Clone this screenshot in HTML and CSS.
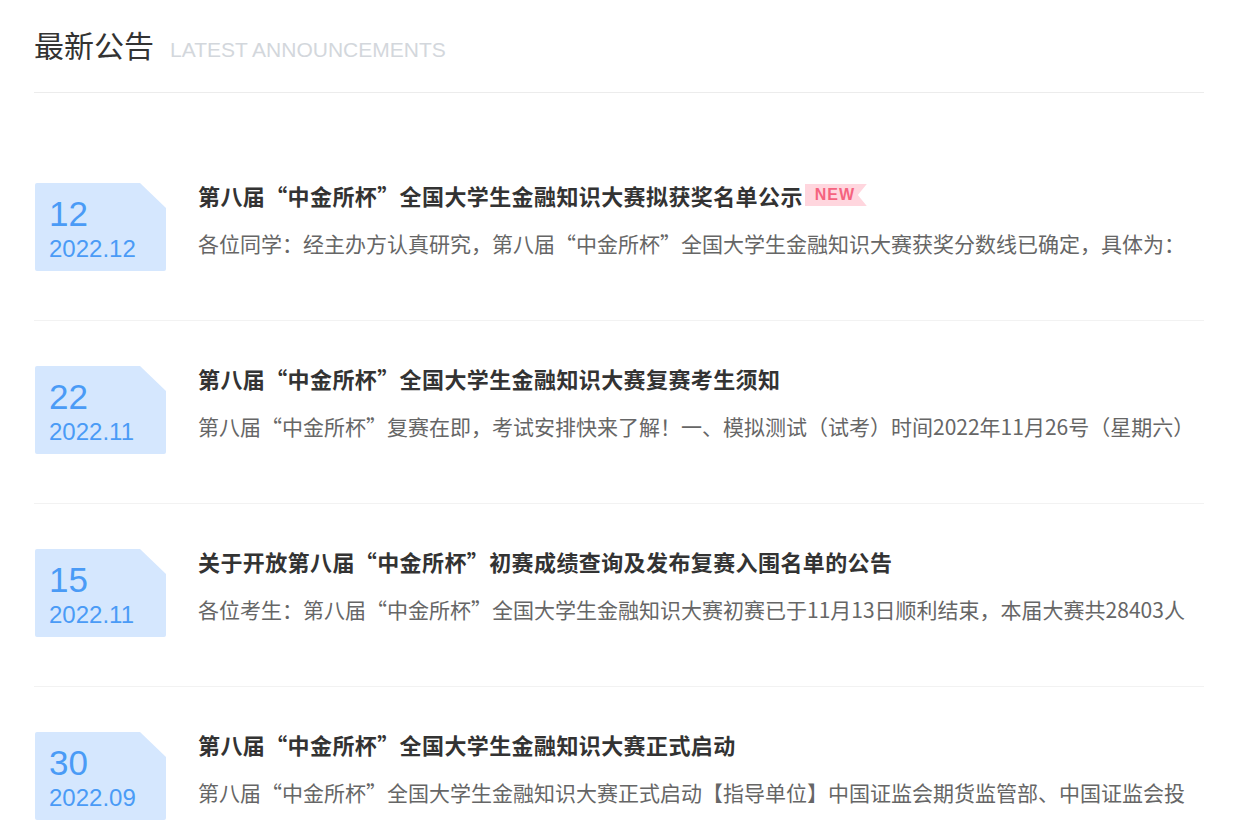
FILE: index.html
```html
<!DOCTYPE html>
<html lang="zh-CN">
<head>
    <meta charset="UTF-8">
    <meta name="viewport" content="width=device-width, initial-scale=1.0">
    <title>最新公告</title>
    <link rel="stylesheet" href="styles.css">
</head>
<body>
    <div class="notice-container">
        <div class="notice-header">
            <h2>最新公告</h2>
            <span class="sub-title">LATEST ANNOUNCEMENTS</span>
        </div>
        <ul class="notice-list">
            <li class="notice-item">
                <div class="date-box">
                    <span class="day">12</span>
                    <span class="month">2022.12</span>
                </div>
                <div class="notice-body">
                    <h3>第八届“中金所杯”全国大学生金融知识大赛拟获奖名单公示<span class="new-tag">NEW</span></h3>
                    <p>各位同学：经主办方认真研究，第八届“中金所杯”全国大学生金融知识大赛获奖分数线已确定，具体为：</p>
                </div>
            </li>
            <li class="notice-item">
                <div class="date-box">
                    <span class="day">22</span>
                    <span class="month">2022.11</span>
                </div>
                <div class="notice-body">
                    <h3>第八届“中金所杯”全国大学生金融知识大赛复赛考生须知</h3>
                    <p>第八届“中金所杯”复赛在即，考试安排快来了解！一、模拟测试（试考）时间2022年11月26号（星期六）</p>
                </div>
            </li>
            <li class="notice-item">
                <div class="date-box">
                    <span class="day">15</span>
                    <span class="month">2022.11</span>
                </div>
                <div class="notice-body">
                    <h3>关于开放第八届“中金所杯”初赛成绩查询及发布复赛入围名单的公告</h3>
                    <p>各位考生：第八届“中金所杯”全国大学生金融知识大赛初赛已于11月13日顺利结束，本届大赛共28403人</p>
                </div>
            </li>
            <li class="notice-item">
                <div class="date-box">
                    <span class="day">30</span>
                    <span class="month">2022.09</span>
                </div>
                <div class="notice-body">
                    <h3>第八届“中金所杯”全国大学生金融知识大赛正式启动</h3>
                    <p>第八届“中金所杯”全国大学生金融知识大赛正式启动【指导单位】中国证监会期货监管部、中国证监会投</p>
                </div>
            </li>
        </ul>
    </div>
</body>
</html>
```

FILE: styles.css
```css
html {
    overflow: hidden;
}
body {
    font-family: 'Noto Sans CJK SC', 'Liberation Sans', sans-serif;
    background-color: #ffffff;
    color: #333333;
    margin: 0;
}
.notice-container {
    width: 1170px;
    margin-left: 34px;
}
.notice-header {
    display: flex;
    align-items: baseline;
    gap: 16px;
    padding-top: 24px;
    padding-bottom: 28px;
    border-bottom: 1px solid #ececec;
}
.notice-header h2 {
    margin: 0;
    font-size: 30px;
    font-weight: normal;
    line-height: 40px;
    color: #333333;
}
.sub-title {
    font-family: 'Liberation Sans', sans-serif;
    font-size: 21px;
    color: #d3d7dc;
}
.notice-list {
    list-style: none;
    margin: 0;
    padding: 45px 0 0 0;
}
.notice-item {
    display: flex;
    align-items: flex-start;
    padding: 45px 0 49px 1px;
    border-bottom: 1px solid #f2f2f2;
}
.date-box {
    width: 131px;
    height: 88px;
    flex-shrink: 0;
    box-sizing: border-box;
    padding: 11px 0 0 14px;
    background-color: #d5e7fe;
    color: #4a9bf6;
    border-radius: 2px;
    clip-path: polygon(0 0, 105px 0, 131px 25px, 131px 88px, 0 88px);
    display: flex;
    flex-direction: column;
    font-family: 'Liberation Sans', sans-serif;
}
.day {
    font-size: 35px;
    line-height: 40px;
}
.month {
    font-size: 24px;
    line-height: 30px;
}
.notice-body {
    flex: 1;
    min-width: 0;
    margin: -3px 0 0 32px;
}
.notice-body h3 {
    margin: 0;
    font-size: 22px;
    letter-spacing: 0.4px;
    line-height: 30px;
    font-weight: bold;
    color: #333333;
    display: flex;
    align-items: center;
}
.notice-body p {
    margin: 18px 0 0 0;
    font-size: 21px;
    line-height: 30px;
    color: #666666;
    white-space: nowrap;
    overflow: hidden;
}
.new-tag {
    display: inline-block;
    box-sizing: border-box;
    width: 62px;
    margin-left: 2px;
    padding-left: 10px;
    height: 22px;
    line-height: 22px;
    font-family: 'Liberation Sans', sans-serif;
    font-size: 16px;
    font-weight: bold;
    letter-spacing: 1px;
    color: #f5637f;
    background-color: #ffd6de;
    clip-path: polygon(0 0, 100% 0, calc(100% - 9px) 50%, 100% 100%, 0 100%);
}
```
